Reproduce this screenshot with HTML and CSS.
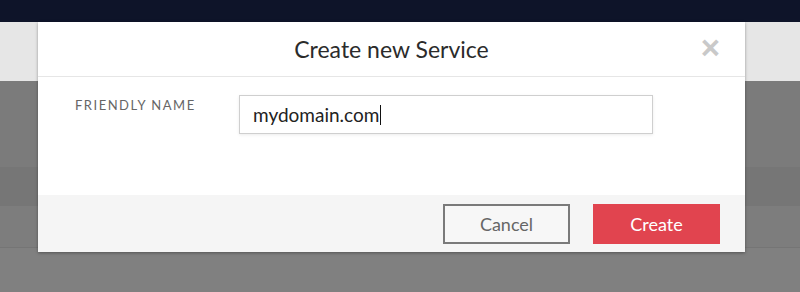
FILE: index.html
```html
<!DOCTYPE html>
<html>
<head>
    <meta name="viewport" content="width=device-width, initial-scale=1.0">
    <link rel="stylesheet" href="styles.css">
</head>
<body>
    <div class="page">
        <div class="topbar"></div>
        <div class="subbar"></div>
        <div class="rows">
            <div class="row row-a"></div>
            <div class="row row-b"></div>
            <div class="row row-c"></div>
            <div class="row row-d"></div>
        </div>
    </div>

    <div class="modal">
        <div class="modal-header">
            <h2>Create new Service</h2>
            <button class="close-modal">&times;</button>
        </div>
        <div class="modal-body">
            <label>Friendly name</label>
            <div class="field">mydomain.com<span class="caret"></span></div>
        </div>
        <div class="modal-footer">
            <button class="btn btn-cancel">Cancel</button>
            <button class="btn btn-create">Create</button>
        </div>
    </div>
</body>
</html>
```

FILE: styles.css
```css
html, body {
    margin: 0;
    padding: 0;
    width: 100%;
    height: 100%;
    background: #808080;
    font-family: Lato, "Open Sans", Arial, sans-serif;
    overflow: hidden;
}

.page {
    display: flex;
    flex-direction: column;
}

.topbar {
    height: 22px;
    background: #0e1429;
}

.subbar {
    height: 59px;
    background: #e6e6e6;
}

.row {
    box-sizing: border-box;
}

.row-a {
    height: 86px;
    background: #7b7b7b;
}

.row-b {
    height: 39px;
    background: #767676;
}

.row-c {
    height: 42px;
    background: #7d7d7d;
    border-bottom: 1px solid #757575;
}

.row-d {
    height: 44px;
    background: #808080;
}

/* dialog over the page */
.modal {
    position: absolute;
    top: 22px;
    left: 38px;
    width: 707px;
    background: white;
    box-shadow: 0 1px 3px rgba(0, 0, 0, 0.35);
}

.modal-header {
    height: 54px;
    border-bottom: 1px solid #e6e6e6;
    display: flex;
    justify-content: center;
    align-items: center;
    position: relative;
}

.modal-header h2 {
    margin: 0;
    font-size: 23px;
    font-weight: normal;
    color: #2b2b2b;
}

.close-modal {
    position: absolute;
    right: 25px;
    top: 11px;
    background: none;
    border: none;
    padding: 0;
    font-family: Arial, sans-serif;
    font-size: 33px;
    font-weight: bold;
    line-height: 30px;
    color: #c9c9c9;
    cursor: pointer;
}

.modal-body {
    height: 118px;
    box-sizing: border-box;
    padding: 18px 0 0 37px;
    display: flex;
    align-items: flex-start;
}

.modal-body label {
    width: 164px;
    margin-top: 2px;
    font-size: 13px;
    letter-spacing: 1.5px;
    text-transform: uppercase;
    color: #666;
}

.field {
    width: 414px;
    height: 39px;
    box-sizing: border-box;
    border: 1px solid #cfcfcf;
    box-shadow: 0 1px 3px rgba(0, 0, 0, 0.08);
    padding: 0 13px;
    display: flex;
    align-items: center;
    font-size: 19px;
    color: #222;
}

.caret {
    display: inline-block;
    width: 1px;
    height: 20px;
    background: #111;
    margin-left: 1px;
}

.modal-footer {
    height: 57px;
    background: #f5f5f5;
    display: flex;
    justify-content: flex-end;
    align-items: center;
    gap: 23px;
    padding-right: 25px;
}

.btn {
    width: 127px;
    height: 40px;
    font-family: Lato, "Open Sans", Arial, sans-serif;
    font-size: 18px;
    cursor: pointer;
    box-sizing: border-box;
}

.btn-cancel {
    background: #f7f7f7;
    border: 2px solid #7a7a7a;
    color: #666;
}

.btn-create {
    background: #e1444f;
    border: none;
    color: white;
}
```
